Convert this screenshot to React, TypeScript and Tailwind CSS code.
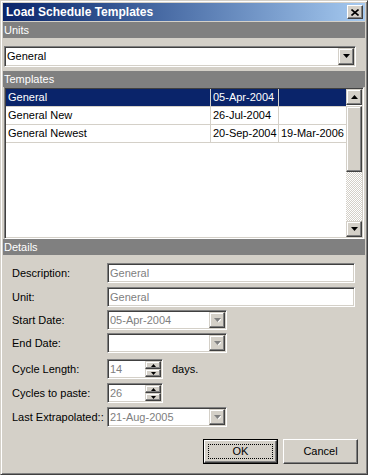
import React from "react";

/* ================= STYLES ================= */

const raised =
  "bg-[#d4d0c8] border border-t-white border-l-white border-r-[#404040] border-b-[#404040] shadow-[inset_-1px_-1px_0_#808080,inset_1px_1px_0_#d4d0c8]";
const sbButton =
  "bg-[#d4d0c8] border border-t-[#d4d0c8] border-l-[#d4d0c8] border-r-[#404040] border-b-[#404040] shadow-[inset_-1px_-1px_0_#808080,inset_1px_1px_0_#ffffff]";
const sunken =
  "bg-white border border-t-[#808080] border-l-[#808080] border-b-white border-r-white shadow-[inset_1px_1px_0_#404040,inset_-1px_-1px_0_#d4d0c8]";

type Row = { name: string; start: string; end: string };

const rows: Row[] = [
  { name: "General", start: "05-Apr-2004", end: "" },
  { name: "General New", start: "26-Jul-2004", end: "" },
  { name: "General Newest", start: "20-Sep-2004", end: "19-Mar-2006 1" },
];

/* ================= GLYPHS ================= */

function DownArrow({ disabled = false }: { disabled?: boolean }) {
  return (
    <svg width="7" height="5" viewBox="0 0 7 5">
      {disabled && <polygon points="1,1 8,1 4.5,4.5" fill="#ffffff" />}
      <polygon points="0,0 7,0 3.5,4" fill={disabled ? "#808080" : "#000000"} />
    </svg>
  );
}

function UpArrow() {
  return (
    <svg width="7" height="4" viewBox="0 0 7 4">
      <polygon points="0,4 7,4 3.5,0" fill="#000000" />
    </svg>
  );
}

function SmallArrow({ up }: { up?: boolean }) {
  return (
    <svg width="5" height="3" viewBox="0 0 5 3">
      <polygon points={up ? "0,3 5,3 2.5,0" : "0,0 5,0 2.5,3"} fill="#000000" />
    </svg>
  );
}

function Header({ label }: { label: string }) {
  return (
    <div className="h-[16px] bg-[#808080] text-white pl-[1px] flex items-center leading-none">
      {label}
    </div>
  );
}

function Combo({
  value,
  width,
  disabled = false,
  height = "h-[20px]",
}: {
  value: string;
  width: string;
  disabled?: boolean;
  height?: string;
}) {
  return (
    <div className={`${sunken} ${width} ${height} p-[1px] flex`}>
      <div
        className={`flex-1 flex items-center pl-[1px] leading-none ${
          disabled ? "text-[#808080]" : "text-black"
        }`}
      >
        {value}
      </div>
      <div className={`${sbButton} w-[16px] flex items-center justify-center`}>
        <DownArrow disabled={disabled} />
      </div>
    </div>
  );
}

function TextBox({ value }: { value: string }) {
  return (
    <div
      className={`${sunken} w-[248px] h-[20px] flex items-center pl-[2px] text-[#808080] leading-none`}
    >
      {value}
    </div>
  );
}

function Spinner({ value }: { value: string }) {
  return (
    <div className={`${sunken} w-[56px] h-[20px] p-[1px] flex`}>
      <div className="flex-1 flex items-center pl-[1px] text-[#808080] leading-none">
        {value}
      </div>
      <div className="w-[16px] flex flex-col">
        <div className={`${sbButton} h-[8px] flex items-center justify-center`}>
          <SmallArrow up />
        </div>
        <div className={`${sbButton} h-[8px] flex items-center justify-center`}>
          <SmallArrow />
        </div>
      </div>
    </div>
  );
}

function Field({
  label,
  mt,
  children,
}: {
  label: string;
  mt: string;
  children: React.ReactNode;
}) {
  return (
    <div className={`flex items-center ${mt}`}>
      <div className="w-[95px] pl-[9px] leading-none box-content">{label}</div>
      {children}
    </div>
  );
}

export default function App() {
  return (
    <div className="w-[368px] h-[475px] bg-[#d4d0c8] border border-t-[#d4d0c8] border-l-[#d4d0c8] border-r-[#404040] border-b-[#404040] shadow-[inset_1px_1px_0_#ffffff,inset_-1px_-1px_0_#808080] p-[2px] flex flex-col text-[11px] text-black font-['Liberation_Sans',Arial,sans-serif]">
      {/* ===== TITLE BAR ===== */}
      <div className="h-[18px] flex items-center justify-between pl-[3px] pr-[2px] bg-linear-to-r from-[#0a246a] to-[#a6caf0]">
        <span className="text-white font-bold text-[12px] leading-none">
          Load Schedule Templates
        </span>
        <div className={`${raised} w-[16px] h-[14px] flex items-center justify-center`}>
          <svg width="8" height="7" viewBox="0 0 8 7">
            <path d="M0.5 0.5 L7.5 6.5 M7.5 0.5 L0.5 6.5" stroke="#000" strokeWidth="1.6" />
          </svg>
        </div>
      </div>

      {/* ===== UNITS ===== */}
      <div className="mt-[1px]">
        <Header label="Units" />
      </div>
      <div className="mt-[8px] ml-[1px]">
        <Combo value="General" width="w-[352px]" height="h-[21px]" />
      </div>

      {/* ===== TEMPLATES ===== */}
      <div className="mt-[4px]">
        <Header label="Templates" />
      </div>
      <div className={`${sunken} ml-[1px] mr-[1px] h-[152px] p-[1px] flex`}>
        <div className="flex-1 bg-white overflow-hidden">
          {rows.map((r, i) => (
            <div
              key={r.name}
              className={`flex h-[18px] border-b border-[#d4d0c8] ${
                i === 0 ? "bg-[#0a246a] text-white" : ""
              }`}
            >
              <div className="w-[205px] border-r border-[#d4d0c8] pl-[2px] flex items-center leading-none">
                {r.name}
              </div>
              <div className="w-[68px] border-r border-[#d4d0c8] pl-[2px] flex items-center leading-none">
                {r.start}
              </div>
              <div className="flex-1 pl-[2px] flex items-center leading-none overflow-hidden whitespace-nowrap">
                {r.end}
              </div>
            </div>
          ))}
        </div>
        {/* scrollbar */}
        <div className="w-[16px] flex flex-col">
          <div className={`${sbButton} h-[16px] flex items-center justify-center`}>
            <UpArrow />
          </div>
          <div className={`${sbButton} h-[66px] mt-[1px]`} />
          <div className="flex-1 bg-[image:repeating-conic-gradient(#d4d0c8_0_25%,#ffffff_0_50%)] bg-[length:2px_2px]" />
          <div className={`${sbButton} h-[16px] flex items-center justify-center`}>
            <DownArrow />
          </div>
        </div>
      </div>

      {/* ===== DETAILS ===== */}
      <Header label="Details" />

      <Field label="Description:" mt="mt-[8px]">
        <TextBox value="General" />
      </Field>
      <Field label="Unit:" mt="mt-[4px]">
        <TextBox value="General" />
      </Field>
      <Field label="Start Date:" mt="mt-[3px]">
        <Combo value="05-Apr-2004" width="w-[120px]" disabled />
      </Field>
      <Field label="End Date:" mt="mt-[3px]">
        <Combo value="" width="w-[120px]" disabled />
      </Field>
      <Field label="Cycle Length:" mt="mt-[6px]">
        <Spinner value="14" />
        <span className="ml-[9px] leading-none">days.</span>
      </Field>
      <Field label="Cycles to paste:" mt="mt-[4px]">
        <Spinner value="26" />
      </Field>
      <Field label="Last Extrapolated::" mt="mt-[4px]">
        <Combo value="21-Aug-2005" width="w-[120px]" disabled />
      </Field>

      {/* ===== BUTTONS ===== */}
      <div className="mt-[12px] flex justify-end gap-[5px] pr-[7px]">
        <div className="w-[75px] h-[25px] border border-black">
          <div className={`${raised} w-full h-full p-[3px]`}>
            <div className="w-full h-full border border-dotted border-black flex items-center justify-center leading-none">
              OK
            </div>
          </div>
        </div>
        <div className={`${raised} w-[75px] h-[25px] flex items-center justify-center leading-none`}>
          Cancel
        </div>
      </div>
    </div>
  );
}
